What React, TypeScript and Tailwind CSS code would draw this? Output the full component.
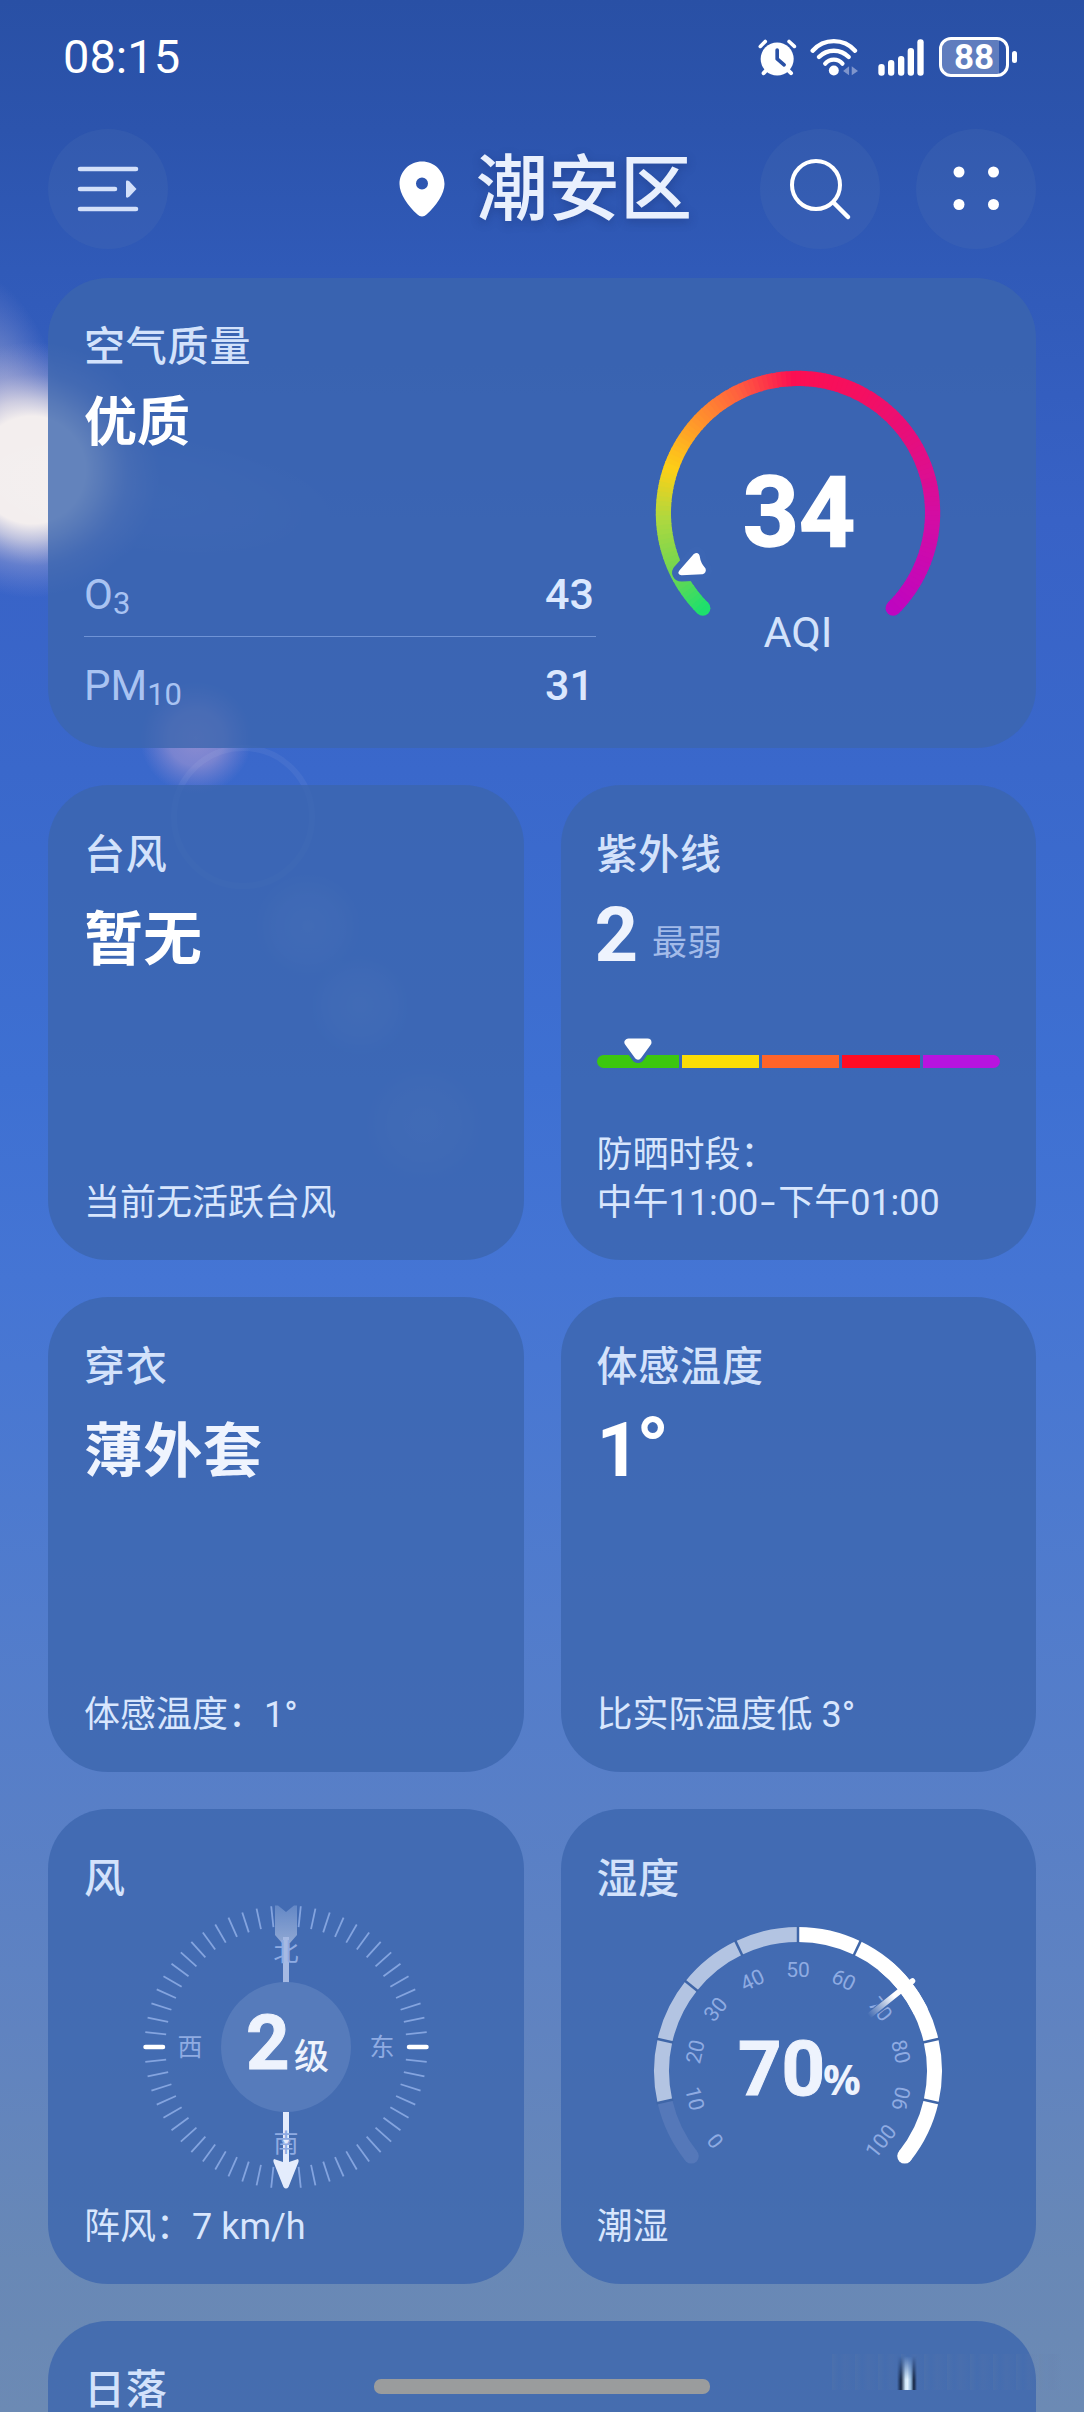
import type { ReactNode } from "react";

type Rgb = [number, number, number];

const CARD = "bg-[rgba(60,102,174,0.79)] rounded-[60px]";

const aqiStops: [number, Rgb][] = [
  [135, [30, 223, 108]],
  [153, [108, 214, 82]],
  [178, [176, 216, 62]],
  [199, [253, 208, 22]],
  [220, [255, 154, 42]],
  [243, [255, 98, 62]],
  [268, [251, 15, 82]],
  [300, [243, 15, 98]],
  [330, [228, 14, 128]],
  [360, [212, 13, 162]],
  [405, [191, 5, 192]],
];

const uvLevels = [
  "w-[82px] bg-[#3cc70f] rounded-l-full",
  "flex-1 bg-[#fbdd06]",
  "flex-1 bg-[#ff6429]",
  "flex-1 bg-[#ff0c24]",
  "flex-1 bg-[#b814df] rounded-r-full",
];

function polar(r: number, deg: number): [number, number] {
  const a = (deg * Math.PI) / 180;
  return [r * Math.cos(a), r * Math.sin(a)];
}

function arc(r: number, from: number, to: number) {
  const [x1, y1] = polar(r, from);
  const [x2, y2] = polar(r, to);
  return `M${x1} ${y1}A${r} ${r} 0 ${to - from > 180 ? 1 : 0} 1 ${x2} ${y2}`;
}

function aqiColor(deg: number) {
  let i = 0;
  while (i < aqiStops.length - 2 && deg > aqiStops[i + 1][0]) i++;
  const [d0, c0] = aqiStops[i];
  const [d1, c1] = aqiStops[i + 1];
  const t = (deg - d0) / (d1 - d0);
  return `rgb(${c0.map((c, k) => Math.round(c + (c1[k] - c) * t)).join(",")})`;
}

function Backdrop() {
  return (
    <div className="absolute inset-0 overflow-hidden bg-[linear-gradient(180deg,#2950a5_0px,#2c54ad_130px,#305ab8_270px,#3862c6_520px,#3a68cb_770px,#3e70d2_1080px,#4575d4_1280px,#4d7acf_1500px,#587fc7_1800px,#6083c0_2030px,#6888b6_2260px,#6c8ab4_2412px)]">
      <svg className="absolute inset-0" width="1084" height="2412" viewBox="0 0 1084 2412">
        <defs>
          <radialGradient id="sun">
            <stop offset="0" stopColor="#f3eeee" />
            <stop offset="0.42" stopColor="#f3eeee" />
            <stop offset="0.55" stopColor="#e6dfe6" stopOpacity="0.75" />
            <stop offset="0.75" stopColor="#c9bfdc" stopOpacity="0.3" />
            <stop offset="1" stopColor="#b0a8dc" stopOpacity="0" />
          </radialGradient>
          <radialGradient id="glow">
            <stop offset="0" stopColor="#e6dfe6" stopOpacity="0.6" />
            <stop offset="0.5" stopColor="#cfc4dc" stopOpacity="0.3" />
            <stop offset="1" stopColor="#b0a8dc" stopOpacity="0" />
          </radialGradient>
          <radialGradient id="flare">
            <stop offset="0" stopColor="#c4a5d6" stopOpacity="0.6" />
            <stop offset="0.5" stopColor="#b8a0d6" stopOpacity="0.5" />
            <stop offset="1" stopColor="#a090d6" stopOpacity="0" />
          </radialGradient>
          <radialGradient id="haze">
            <stop offset="0" stopColor="#fff" stopOpacity="0.13" />
            <stop offset="0.6" stopColor="#fff" stopOpacity="0.08" />
            <stop offset="1" stopColor="#fff" stopOpacity="0" />
          </radialGradient>
        </defs>
        <ellipse cx="8" cy="420" rx="62" ry="150" fill="url(#glow)" transform="rotate(-14 8 420)" />
        <circle cx="32" cy="470" r="128" fill="url(#sun)" />
        <ellipse cx="140" cy="495" rx="200" ry="65" fill="url(#haze)" opacity="0.6" transform="rotate(8 140 495)" />
        <circle cx="196" cy="738" r="56" fill="url(#flare)" />
        <circle cx="243" cy="817" r="69" fill="none" stroke="#fff" strokeOpacity="0.05" strokeWidth="6" />
        <circle cx="308" cy="926" r="52" fill="url(#haze)" />
        <circle cx="360" cy="1005" r="50" fill="url(#haze)" />
        <circle cx="424" cy="1122" r="60" fill="url(#haze)" opacity="0.8" />
      </svg>
    </div>
  );
}

function StatusBar() {
  return (
    <div className="flex h-[114px] items-center pl-[63px] pr-[67px]">
      <div className="relative -top-px text-[47px] leading-none">08:15</div>
      <svg className="ml-auto" width="39" height="38" viewBox="52 50 118 114" fill="none" stroke="#fff" strokeLinecap="round">
        <circle cx="110" cy="113" r="50" fill="#fff" stroke="none" />
        <path d="M59 75L74 60M146 60L162 75" strokeWidth="11" />
        <path d="M82 142L69 156M138 142L152 156" strokeWidth="12" />
        <path d="M110 86V113L131 131" stroke="#2a51a6" strokeWidth="11" strokeLinejoin="round" />
      </svg>
      <svg className="ml-[13px]" width="49" height="38" viewBox="210 50 148 114" fill="none" stroke="#fff" strokeLinecap="round">
        <path d="M218 88A85 85 0 0 1 346 88" strokeWidth="13" />
        <path d="M237 107A63 63 0 0 1 327 107" strokeWidth="13" />
        <path d="M256 127A34 34 0 0 1 308 127" strokeWidth="13" />
        <circle cx="282" cy="148" r="15" fill="#fff" stroke="none" />
        <path d="M328 135V162L310 149ZM336 135V162L355 149Z" fill="#7f95cc" stroke="none" />
      </svg>
      <svg className="ml-[19px]" width="46" height="38" viewBox="416 50 138 114" fill="#fff">
        <rect x="417" y="128" width="19" height="35" rx="9" />
        <rect x="446" y="116" width="19" height="47" rx="9" />
        <rect x="476" y="104" width="19" height="59" rx="9" />
        <rect x="505" y="80" width="19" height="83" rx="9" />
        <rect x="534" y="54" width="19" height="109" rx="9" />
      </svg>
      <div className="ml-[15px] flex items-center">
        <div className="relative flex h-[40px] w-[70px] items-center justify-center rounded-[12px] border-[3px] border-white">
          <div className="absolute inset-y-0 left-0 w-[57px] rounded-l-[9px] bg-white/25" />
          <span className="relative text-[35px] leading-none font-bold">88</span>
        </div>
        <div className="ml-[3px] h-[12px] w-[5px] rounded-full bg-white" />
      </div>
    </div>
  );
}

function RoundButton({ className, children }: { className?: string; children: ReactNode }) {
  return (
    <button className={`flex size-[120px] items-center justify-center rounded-full bg-[#5b82b8]/15 ${className ?? ""}`}>
      <svg width="120" height="120" viewBox="-60 -60 120 120" fill="none" strokeLinecap="round">
        {children}
      </svg>
    </button>
  );
}

function Header() {
  return (
    <header className="mt-[15px] flex h-[120px] items-center px-12">
      <RoundButton>
        <path d="M-28 -20H28M-28 0H7M-28 20H28" stroke="#d3e0fa" strokeWidth="4.600" />
        <path d="M18 -7.500C18 -9 20 -9 21.500 -7.500L28.500 0L21.500 7.500C20 9 18 9 18 7.500Z" fill="#d3e0fa" />
      </RoundButton>
      <div className="ml-[231px] flex items-center">
        <svg width="46" height="56" viewBox="0 0 46 56">
          <path
            fill="#fff"
            fillRule="evenodd"
            d="M23 0.500C10.500 0.500 0.500 10.500 0.500 23C0.500 33 9 45 18.500 53.500C21 56 25 56 27.500 53.500C37 45 45.500 33 45.500 23C45.500 10.500 35.500 0.500 23 0.500ZM23 16.500A6 6 0 1 1 23 28.500A6 6 0 1 1 23 16.500Z"
          />
        </svg>
        <h1 className="relative top-px ml-[31px] text-[72px] leading-none font-medium text-[#e9f0fd] [text-shadow:0_3px_10px_rgba(20,40,100,0.35)]">
          潮安区
        </h1>
      </div>
      <RoundButton className="ml-auto">
        <circle cx="-4" cy="-4" r="24" stroke="#fff" strokeWidth="4" />
        <path d="M13.500 13.500L28 28" stroke="#fff" strokeWidth="4.500" />
      </RoundButton>
      <RoundButton className="ml-9">
        <g fill="#fff">
          <circle cx="-17" cy="-17" r="5.500" />
          <circle cx="17.500" cy="-17" r="5.500" />
          <circle cx="-17" cy="15.500" r="5.500" />
          <circle cx="17.500" cy="15.500" r="5.500" />
        </g>
      </RoundButton>
    </header>
  );
}

function CardTitle({ children }: { children: ReactNode }) {
  return <h2 className="text-[41px] leading-none font-medium tracking-[0.8px] text-[#d3e2fb]">{children}</h2>;
}

function Card({ title, footer, children }: { title: string; footer: ReactNode; children: ReactNode }) {
  return (
    <section className={`${CARD} flex h-[475px] flex-col px-[36px] pt-[50px] pb-[39px]`}>
      <CardTitle>{title}</CardTitle>
      {children}
      <div className="mt-auto text-[36px] leading-none text-[#d8e6fd]">{footer}</div>
    </section>
  );
}

const aqiMarker = "M-117 59L-102.500 42.500Q-101 41.500 -100.500 43.500Q-99.500 51 -94.500 56.500Q-94 58.500 -96 59L-116.500 60Q-118 60 -117 59Z";

function AqiGauge() {
  const steps = Array.from({ length: 135 }, (_, i) => 135 + i * 2);
  return (
    <svg width="300" height="300" viewBox="-150 -150 300 300" fill="none">
      <circle cx={polar(134.6, 135)[0]} cy={polar(134.6, 135)[1]} r="7.600" fill={aqiColor(135)} />
      <circle cx={polar(134.6, 45)[0]} cy={polar(134.6, 45)[1]} r="7.600" fill={aqiColor(405)} />
      {steps.map((d) => (
        <path key={d} d={arc(134.6, d, Math.min(d + 2.4, 405))} stroke={aqiColor(d + 1)} strokeWidth="15.200" />
      ))}
      <path d={aqiMarker} fill="#3c66b4" stroke="#3c66b4" strokeWidth="17" strokeLinejoin="round" />
      <path d={aqiMarker} fill="#fff" stroke="#fff" strokeWidth="4.500" strokeLinejoin="round" />
      <text x="1" y="33" textAnchor="middle" fill="#fff" stroke="#fff" strokeWidth="1.500" fontSize="98" fontWeight="700">
        34
      </text>
      <text x="0" y="134" textAnchor="middle" fill="#d3e2fb" fontSize="43">
        AQI
      </text>
    </svg>
  );
}

function Pollutant({ name, sub, value }: { name: string; sub: string; value: number }) {
  return (
    <div className="flex h-[44px] items-baseline justify-between pr-[2px] leading-none">
      <div className="text-[42px] leading-none text-[#a9c3f2]">
        {name}
        <span className="relative top-[5px] text-[31px]">{sub}</span>
      </div>
      <div className="text-[43px] leading-none font-medium text-[#dbe8fe]">{value}</div>
    </div>
  );
}

function AirQualityCard() {
  return (
    <section className={`${CARD} flex h-[470px] pl-[36px]`}>
      <div className="w-[512px] pt-[49px]">
        <CardTitle>空气质量</CardTitle>
        <div className="mt-[29px] text-[53px] leading-none font-bold">优质</div>
        <div className="mt-[123px]">
          <Pollutant name="O" sub="3" value={43} />
          <div className="mt-[19px] mb-[27px] h-px bg-[#6f93d6]" />
          <Pollutant name="PM" sub="10" value={31} />
        </div>
      </div>
      <div className="mt-[85px] ml-[52px]">
        <AqiGauge />
      </div>
    </section>
  );
}

function UvBar() {
  return (
    <div className="relative mt-[90px] flex h-[13px] gap-[3px]">
      {uvLevels.map((level) => (
        <div key={level} className={level} />
      ))}
      <svg className="absolute -top-[21px] left-[21px]" width="40" height="34" viewBox="0 0 40 34" strokeLinejoin="round">
        <path d="M10 8H30L20 22Z" fill="#3d68b5" stroke="#3d68b5" strokeWidth="14" />
        <path d="M10.500 8.500H29.500L20 21.500Z" fill="#fff" stroke="#fff" strokeWidth="8" />
      </svg>
    </div>
  );
}

function Compass() {
  const ticks = Array.from({ length: 60 }, (_, i) => i * 6).filter((d) => d % 90 !== 0);
  const points = [
    { label: "北", x: 0, y: -95 },
    { label: "东", x: 96, y: 0 },
    { label: "南", x: 0, y: 96 },
    { label: "西", x: -96, y: 0 },
  ];
  return (
    <svg className="mt-[2px] self-center" width="290" height="290" viewBox="-145 -145 290 290">
      <defs>
        <linearGradient id="fletch" x1="0" y1="0" x2="0" y2="1">
          <stop offset="0" stopColor="#6488c6" />
          <stop offset="1" stopColor="#8fa7d3" />
        </linearGradient>
      </defs>
      {ticks.map((d) => (
        <line key={d} x1="120.500" x2="141.500" y1="0" y2="0" stroke="#84a4df" strokeWidth="1.800" transform={`rotate(${d})`} />
      ))}
      <path d="M-140.500 0H-123M123 0H140.500" stroke="#fff" strokeWidth="4.500" strokeLinecap="round" />
      <path d="M-11 -141.500H-8L0 -135L8 -141.500H11V-112L4 -104H-4L-11 -112Z" fill="url(#fletch)" />
      <rect x="-3" y="-110" width="6" height="47" fill="#a5b9e3" />
      <circle r="65" fill="#567bbb" />
      <path d="M-3 65H3V115L12 112Q13 113 12.500 115L2.500 140Q0 143 -2.500 140L-12.500 115Q-13 113 -12 112L-3 115Z" fill="#e4ecfc" />
      {points.map((p) => (
        <text key={p.label} x={p.x} y={p.y + 9} textAnchor="middle" fontSize="25" fill="#8fabe2">
          {p.label}
        </text>
      ))}
      <text x="-40" y="22" fontSize="76" fontWeight="700" fill="#eef3fd" stroke="#eef3fd">
        2
      </text>
      <text x="8" y="22" fontSize="35" fontWeight="500" fill="#eef3fd">
        级
      </text>
    </svg>
  );
}

const STEP = 360 / 14;
const START = 270 - 5 * STEP;
const R = 136.5;

function humidityColor(i: number) {
  if (i === 0) return "#5578b9";
  return i < 5 ? "#b3c4e2" : "#fff";
}

function HumidityGauge() {
  const segments = Array.from({ length: 10 }, (_, i) => i);
  const labels = Array.from({ length: 11 }, (_, i) => i);
  const [x0, y0] = polar(R, START);
  const [x1, y1] = polar(R, START + 10 * STEP);
  return (
    <svg className="mt-[26px] self-center" width="290" height="240" viewBox="-145 -145 290 240" fill="none">
      <defs>
        <linearGradient id="needle" gradientUnits="userSpaceOnUse" x1="71" y1="-55" x2="96" y2="-75">
          <stop offset="0" stopColor="#fff" stopOpacity="0" />
          <stop offset="1" stopColor="#fff" />
        </linearGradient>
      </defs>
      <circle cx={x0} cy={y0} r="7.500" fill="#5578b9" />
      <circle cx={x1} cy={y1} r="7.500" fill="#fff" />
      {segments.map((i) => (
        <path key={i} d={arc(R, START + i * STEP, START + (i + 1) * STEP)} stroke={humidityColor(i)} strokeWidth="15" />
      ))}
      <path d={arc(R, START + 6.5 * STEP, START + 7.5 * STEP)} stroke="#fff" strokeWidth="15" />
      {[1, 2, 3, 4, 5, 6, 8, 9].map((i) => (
        <line key={i} x1="128" x2="145" y1="0" y2="0" stroke="#3f66a8" strokeWidth="2.500" transform={`rotate(${START + i * STEP})`} />
      ))}
      {labels.map((i) => {
        const deg = START + i * STEP;
        const [x, y] = polar(105.7, deg);
        // keep the outermost numbers from turning upside down
        let turn = deg - 270;
        if (turn < -90) turn += 180;
        if (turn > 90) turn -= 180;
        return (
          <text key={i} textAnchor="middle" fontSize="21" fill="#8fabe2" transform={`translate(${x} ${y + 4}) rotate(${turn})`} dy="7.500">
            {i * 10}
          </text>
        );
      })}
      <path d="M78 -60.500L97 -75" stroke="#446cb2" strokeWidth="8" />
      <path d="M72 -56L114.500 -90" stroke="url(#needle)" strokeWidth="5.500" strokeLinecap="round" />
      <text x="-60" y="24" fontSize="76" fontWeight="700" fill="#eef3fd" stroke="#eef3fd">
        70
      </text>
      <text className="font-['Open_Sans']" x="25" y="24" fontSize="42" fontWeight="700" fill="#eef3fd">
        %
      </text>
    </svg>
  );
}

export default function App() {
  return (
    <div className="relative h-[2412px] w-[1084px] overflow-hidden font-[Roboto,'Noto_Sans_CJK_SC',sans-serif] text-white">
      <Backdrop />
      <div className="relative">
        <StatusBar />
        <Header />
        <main className="mt-[29px] flex flex-col gap-[37px] px-12">
          <AirQualityCard />
          <div className="grid grid-cols-2 gap-[37px]">
            <Card title="台风" footer="当前无活跃台风">
              <div className="mt-[34px] text-[59px] leading-none font-bold">暂无</div>
            </Card>
            <Card
              title="紫外线"
              footer={
                <div className="-mb-[6px] leading-[48px]">
                  <div>防晒时段：</div>
                  <div>
                    中午11:00<span className="inline-block w-[20px] scale-x-150 text-center">-</span>下午01:00
                  </div>
                </div>
              }
            >
              <div className="mt-[30px] flex h-[59px] items-baseline leading-[59px]">
                <span className="-ml-[2px] text-[76px] font-bold text-[#eef3fd]">2</span>
                <span className="relative -top-[6px] ml-[14px] text-[35px] text-[#a3bbe9]">最弱</span>
              </div>
              <UvBar />
            </Card>
            <Card title="穿衣" footer="体感温度：1°">
              <div className="mt-[34px] text-[59px] leading-none font-bold tracking-[0.5px] text-[#eff4fe]">薄外套</div>
            </Card>
            <Card title="体感温度" footer="比实际温度低 3°">
              <div className="mt-[29px] flex h-[59px] items-baseline text-[76px] leading-[59px] font-bold">
                <span>1</span>
                <span className="relative top-[2px] -ml-[4px] text-[86px]">°</span>
              </div>
            </Card>
            <Card title="风" footer="阵风：7 km/h">
              <Compass />
            </Card>
            <Card title="湿度" footer="潮湿">
              <HumidityGauge />
            </Card>
          </div>
          <section className={`${CARD} h-[475px] px-[36px] pt-[49px]`}>
            <CardTitle>日落</CardTitle>
          </section>
        </main>
      </div>
      <div className="absolute top-[2379px] left-[374px] h-[15px] w-[336px] rounded-[7px] bg-[#9a9c9d]" />
      <div className="absolute top-[2354px] left-[832px] h-[36px] w-[230px] bg-[repeating-linear-gradient(90deg,rgba(110,130,160,0.16)_0px,rgba(70,110,180,0.03)_7px,rgba(100,120,165,0.14)_13px,rgba(70,110,180,0)_23px)]" />
      <div className="absolute top-[2356px] left-[897px] h-[34px] w-[20px] bg-[linear-gradient(90deg,rgba(10,20,40,0)_0%,#14233f_20%,#cfe6f7_42%,#e4f4ff_52%,#8fb4d8_70%,#14233f_84%,rgba(10,20,40,0)_100%)] [mask-image:linear-gradient(180deg,transparent,#000_70%)]" />
    </div>
  );
}
